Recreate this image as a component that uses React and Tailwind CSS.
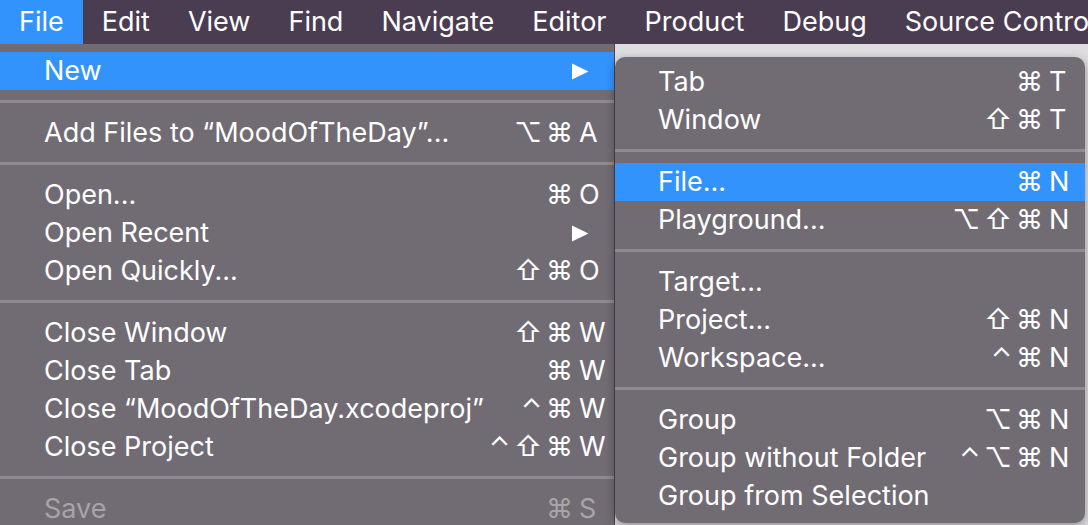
import React from 'react';

const FONT = { fontFamily: 'Inter, "Noto Sans", "DejaVu Sans", sans-serif' };

const menuBar = ['File', 'Edit', 'View', 'Find', 'Navigate', 'Editor', 'Product', 'Debug', 'Source Control'];

const Arrow = () => (
  <svg width="18" height="17" viewBox="0 0 18 17" className="mr-[25px]">
    <path d="M1 0.5 L17.5 8.5 L1 16.5 Z" fill="currentColor" />
  </svg>
);

const Sep = () => (
  <div className="h-[24px] pt-[10px]">
    <div className="h-[3px] w-full bg-[#8f8a91]" />
  </div>
);

function Item({ label, mods = '', k = '', arrow, active, disabled, keyW, pl }) {
  return (
    <div
      className={`h-[38px] flex items-center ${pl} ${active ? 'bg-[#3393fc]' : ''} ${disabled ? 'text-[#a8a3aa]' : 'text-white'}`}
    >
      <span className="flex-1 whitespace-nowrap">{label}</span>
      {arrow ? (
        <Arrow />
      ) : (
        <div className="flex items-center">
          <span className="whitespace-nowrap tracking-[4px]">{mods}</span>
          <span className={`${keyW} text-left`}>{k}</span>
        </div>
      )}
    </div>
  );
}

const leftMenu = [
  { label: 'New', arrow: true, active: true },
  'sep',
  { label: 'Add Files to \u201CMoodOfTheDay\u201D...', mods: '\u2325\u2318', k: 'A' },
  'sep',
  { label: 'Open...', mods: '\u2318', k: 'O' },
  { label: 'Open Recent', arrow: true },
  { label: 'Open Quickly...', mods: '\u21E7\u2318', k: 'O' },
  'sep',
  { label: 'Close Window', mods: '\u21E7\u2318', k: 'W' },
  { label: 'Close Tab', mods: '\u2318', k: 'W' },
  { label: 'Close \u201CMoodOfTheDay.xcodeproj\u201D', mods: '\u2303\u2318', k: 'W' },
  { label: 'Close Project', mods: '\u2303\u21E7\u2318', k: 'W' },
  'sep',
  { label: 'Save', mods: '\u2318', k: 'S', disabled: true },
];

const subMenu = [
  { label: 'Tab', mods: '\u2318', k: 'T' },
  { label: 'Window', mods: '\u21E7\u2318', k: 'T' },
  'sep',
  { label: 'File...', mods: '\u2318', k: 'N', active: true },
  { label: 'Playground...', mods: '\u2325\u21E7\u2318', k: 'N' },
  'sep',
  { label: 'Target...' },
  { label: 'Project...', mods: '\u21E7\u2318', k: 'N' },
  { label: 'Workspace...', mods: '\u2303\u2318', k: 'N' },
  'sep',
  { label: 'Group', mods: '\u2325\u2318', k: 'N' },
  { label: 'Group without Folder', mods: '\u2303\u2325\u2318', k: 'N' },
  { label: 'Group from Selection' },
];

export default function App() {
  return (
    <div className="w-[1088px] h-[525px] overflow-hidden bg-[#dfdcdf] flex flex-col text-[27px] antialiased" style={FONT}>
      {/* menu bar */}
      <div className="h-[44px] bg-[#4b3d51] flex items-center text-white shrink-0">
        {menuBar.map((m, i) => (
          <div
            key={m}
            className={`h-full flex items-center px-[19px] whitespace-nowrap shrink-0 ${i === 0 ? 'bg-[#3393fc]' : ''}`}
          >
            {m}
          </div>
        ))}
      </div>

      <div className="flex flex-1 min-h-0">
        {/* File menu */}
        <div className="w-[615px] shrink-0 bg-[#716c73] pt-[8px] border-r border-[#4a454c]">
          {leftMenu.map((it, i) =>
            it === 'sep' ? (
              <Sep key={i} />
            ) : (
              <Item key={i} {...it} pl="pl-[44px]" keyW="w-[37px] pl-[2px]" />
            )
          )}
        </div>

        {/* New submenu */}
        <div className="flex-1 pt-[13px]">
          <div className="w-[470px] rounded-[10px] bg-[#716c73] pt-[6px] pb-[8px] shadow-[0_3px_10px_rgba(0,0,0,0.35)] overflow-hidden">
            {subMenu.map((it, i) =>
              it === 'sep' ? (
                <Sep key={i} />
              ) : (
                <Item key={i} {...it} pl="pl-[43px]" keyW="w-[38px] pl-[2px]" />
              )
            )}
          </div>
        </div>
      </div>
    </div>
  );
}
